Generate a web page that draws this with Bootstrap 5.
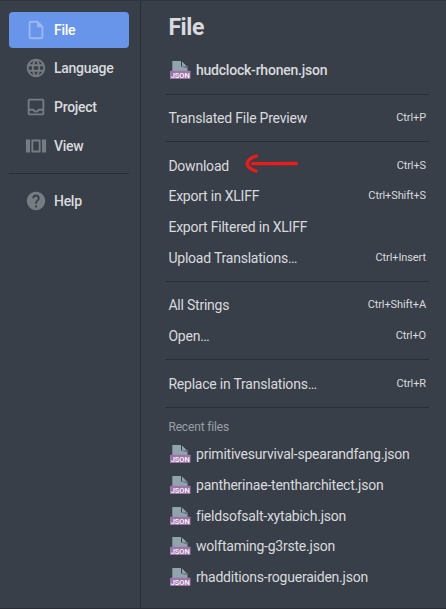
<!DOCTYPE html>
<html lang="en">
<head>
<meta charset="utf-8">
<meta name="viewport" content="width=device-width, initial-scale=1">
<title>File menu</title>
<link href="https://cdn.jsdelivr.net/npm/bootstrap@5.3.0/dist/css/bootstrap.min.css" rel="stylesheet">
<style>
html,body{height:100%;overflow:hidden}
body{background:#393f48;color:#d8dade;font-family:Roboto,"Liberation Sans",sans-serif;font-size:14px;line-height:20px;letter-spacing:-.22px}
.app-menu{height:609px;border-top:1px solid #2f3441;border-bottom:1px solid #292d35}
.side{width:141px;padding:11px 11px 0 9px;border-right:1px solid #292d35;flex:none}
.side .nav-link{height:36px;margin-bottom:2.65px;padding:0 0 0 16px;color:#d8dade;font-weight:500;font-size:14px;letter-spacing:-.28px;border-radius:4px;gap:7px}
.side .nav-link:nth-child(2){margin-top:-.3px;margin-bottom:2.95px}
.side .nav-link.active{background:#6894ea;color:#fff}
.side svg{width:22px;height:22px;flex:none;color:#777c83}
.side .active svg{color:#9bb8f2}
.rule{height:1px;background:#292d35;margin:8px 0}
.side .rule{margin:6px 0 9px}
.pane{padding:0 17px 0 24px;min-width:0}
.pane h1{font-size:23px;line-height:28px;font-weight:700;letter-spacing:-.4px;margin:0;padding:13px 0 12.9px 3.4px}
.entry{height:30.65px;padding:.5px 3px 0 3.4px}
.entry kbd{padding:0;background:none;color:#d8dade;font-family:inherit;font-size:11px;letter-spacing:-.1px}
.entry svg{width:22px;height:20px;margin:0 5px 0 .6px;flex:none}
.current{font-weight:500;padding-top:0}
.recent{height:23px;padding-left:3.4px;font-size:12px;line-height:23px;letter-spacing:-.15px;color:#9a9fa6}
.pointer{position:absolute;left:78px;top:4px;width:56px!important;height:20px!important}
</style>
<script src="https://cdn.jsdelivr.net/npm/bootstrap@5.3.0/dist/js/bootstrap.bundle.min.js"></script>
</head>
<body>
<svg class="d-none">
<symbol id="json" viewBox="0 0 22 20">
<path d="M3.300 1H12v5.500h6.500V11H3.300z" fill="#90a4ae"/><path d="M13 1.500 18 6.500h-5z" fill="#90a4ae"/><path d="M12 6.500h6.500V8.500z" fill="#66747d"/>
<rect x="1" y="10.700" width="20.500" height="8.300" rx=".6" fill="#9c74a8"/>
<text x="11.250" y="17.700" text-anchor="middle" font-family="Roboto,sans-serif" font-size="7.500" letter-spacing="0" font-weight="500" fill="#fff">JSON</text>
</symbol>
</svg>
<div class="app-menu d-flex">
<nav class="side nav flex-column flex-nowrap">
<a class="nav-link active d-flex align-items-center" href="#"><svg viewBox="0 0 24 24" fill="currentColor"><path d="M14 2H6a2 2 0 0 0-2 2v16a2 2 0 0 0 2 2h12a2 2 0 0 0 2-2V8zm4 18H6V4h7v5h5z"/></svg>File</a>
<a class="nav-link d-flex align-items-center" href="#"><svg viewBox="0 0 24 24" fill="currentColor"><path d="M11.99 2C6.47 2 2 6.48 2 12s4.47 10 9.99 10C17.52 22 22 17.52 22 12S17.52 2 11.99 2zm6.93 6h-2.95a15.65 15.65 0 0 0-1.38-3.56A8.03 8.03 0 0 1 18.92 8zM12 4.04c.83 1.2 1.48 2.53 1.91 3.96h-3.82c.43-1.43 1.08-2.76 1.91-3.96zM4.26 14C4.1 13.36 4 12.69 4 12s.1-1.36.26-2h3.38c-.08.66-.14 1.32-.14 2s.06 1.34.14 2H4.26zm.82 2h2.95c.32 1.25.78 2.45 1.38 3.56A7.99 7.99 0 0 1 5.08 16zm2.95-8H5.08a7.99 7.99 0 0 1 4.33-3.56A15.65 15.65 0 0 0 8.03 8zM12 19.96c-.83-1.2-1.48-2.53-1.91-3.96h3.82c-.43 1.43-1.08 2.76-1.91 3.96zM14.34 14H9.66c-.09-.66-.16-1.32-.16-2s.07-1.35.16-2h4.68c.09.65.16 1.32.16 2s-.07 1.34-.16 2zm.25 5.56c.6-1.11 1.06-2.31 1.38-3.56h2.95a8.03 8.03 0 0 1-4.33 3.56zM16.36 14c.08-.66.14-1.32.14-2s-.06-1.34-.14-2h3.38c.16.64.26 1.31.26 2s-.1 1.36-.26 2h-3.38z"/></svg>Language</a>
<a class="nav-link d-flex align-items-center" href="#"><svg viewBox="0 0 24 24" fill="currentColor"><path d="M19 3H5a2 2 0 0 0-2 2v14a2 2 0 0 0 2 2h14a2 2 0 0 0 2-2V5a2 2 0 0 0-2-2zm0 16H5v-3h3.56c.69 1.19 1.97 2 3.45 2s2.75-.81 3.45-2H19zm0-5h-4.99c0 1.1-.9 2-2 2s-2-.9-2-2H5V5h14z"/></svg>Project</a>
<a class="nav-link d-flex align-items-center" href="#"><svg viewBox="0 0 24 24" fill="currentColor"><path d="M1 5h4.500v14H1zM18.500 5H23v14h-4.500zM7 5h10v14H7zm2 2v10h6V7z"/></svg>View</a>
<div class="rule"></div>
<a class="nav-link d-flex align-items-center" href="#"><svg viewBox="0 0 24 24" fill="currentColor"><path d="M12 2C6.480 2 2 6.480 2 12s4.480 10 10 10 10-4.480 10-10S17.520 2 12 2zm1 17h-2v-2h2zm2.070-7.750-.9.920C13.450 12.900 13 13.500 13 15h-2v-.5c0-1.100.45-2.100 1.170-2.830l1.240-1.260c.37-.36.59-.86.59-1.410a2 2 0 0 0-4 0H8a4 4 0 0 1 8 0c0 .88-.36 1.680-.93 2.250z"/></svg>Help</a>
</nav>
<main class="pane flex-grow-1">
<h1>File</h1>
<div class="entry current d-flex align-items-center"><svg><use href="#json"/></svg>hudclock-rhonen.json</div>
<div class="rule"></div>
<div class="entry d-flex align-items-center justify-content-between"><span>Translated File Preview</span><kbd>Ctrl+P</kbd></div>
<div class="rule"></div>
<div class="entry position-relative d-flex align-items-center justify-content-between"><span>Download</span><svg class="pointer" viewBox="0 0 56 20" fill="none" stroke="#eb1c1c" stroke-width="3.300" stroke-linecap="round" stroke-linejoin="round"><path d="M12.500 2.200C8 3 3.500 6 3 9.500c1 4 5 6.500 9 7.500M8.500 9.700h19l25-.2"/></svg><kbd>Ctrl+S</kbd></div>
<div class="entry d-flex align-items-center justify-content-between"><span>Export in XLIFF</span><kbd>Ctrl+Shift+S</kbd></div>
<div class="entry d-flex align-items-center"><span>Export Filtered in XLIFF</span></div>
<div class="entry d-flex align-items-center justify-content-between"><span>Upload Translations…</span><kbd>Ctrl+Insert</kbd></div>
<div class="rule"></div>
<div class="entry d-flex align-items-center justify-content-between"><span>All Strings</span><kbd>Ctrl+Shift+A</kbd></div>
<div class="entry d-flex align-items-center justify-content-between"><span>Open…</span><kbd>Ctrl+O</kbd></div>
<div class="rule"></div>
<div class="entry d-flex align-items-center justify-content-between"><span>Replace in Translations…</span><kbd>Ctrl+R</kbd></div>
<div class="rule"></div>
<div class="recent">Recent files</div>
<div class="entry d-flex align-items-center"><svg><use href="#json"/></svg>primitivesurvival-spearandfang.json</div>
<div class="entry d-flex align-items-center"><svg><use href="#json"/></svg>pantherinae-tentharchitect.json</div>
<div class="entry d-flex align-items-center"><svg><use href="#json"/></svg>fieldsofsalt-xytabich.json</div>
<div class="entry d-flex align-items-center"><svg><use href="#json"/></svg>wolftaming-g3rste.json</div>
<div class="entry d-flex align-items-center"><svg><use href="#json"/></svg>rhadditions-rogueraiden.json</div>
</main>
</div>
</body>
</html>
